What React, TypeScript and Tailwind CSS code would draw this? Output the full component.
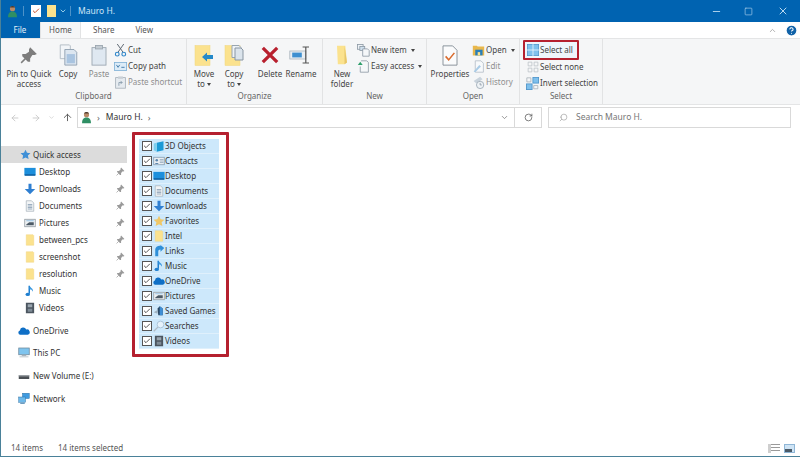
import type { ReactNode } from "react";
import { ChevronDown, ChevronUp, Minus, RotateCw, Search, Square, X, ArrowLeft, ArrowRight, ArrowUp, Check, HelpCircle } from "lucide-react";

// ---- icons, all inline since the explorer ones are not in any package
function Svg({ s = 16, children, className }: { s?: number; children: ReactNode; className?: string }) {
  return (
    <svg width={s} height={s} viewBox="0 0 16 16" className={className} fill="none">
      {children}
    </svg>
  );
}

const FolderIco = ({ s = 12 }: { s?: number }) => (
  <Svg s={s}>
    <path d="M3 1h9l1 1v13H3z" fill="#fbe28e" stroke="#efd27a" strokeWidth="0.6" />
  </Svg>
);
const DesktopIco = ({ s = 12 }: { s?: number }) => (
  <Svg s={s}>
    <rect x="0.5" y="2.5" width="15" height="10" fill="#1c8fdc" />
    <rect x="1" y="11" width="14" height="2" fill="#0f5f9e" />
  </Svg>
);
const DownloadIco = ({ s = 12 }: { s?: number }) => (
  <Svg s={s}>
    <path d="M6 1h4v7h5l-7 7-7-7h5z" fill="#2f7fd1" />
  </Svg>
);
const DocIco = ({ s = 12 }: { s?: number }) => (
  <Svg s={s}>
    <path d="M3 1h7l3 3v11H3z" fill="#f2f4f6" stroke="#a9b3bc" />
    <path d="M5 6h6M5 8h6M5 10h6M5 12h6" stroke="#7f97ad" />
  </Svg>
);
const PicturesIco = ({ s = 12 }: { s?: number }) => (
  <Svg s={s}>
    <rect x="1" y="3" width="14" height="10" fill="#eef1f3" stroke="#8b949c" />
    <path d="M3 10l4-3 6 0v4H3z" fill="#4c5a66" />
    <path d="M3 5h10" stroke="#9bc4e4" strokeWidth="1.4" />
  </Svg>
);
const MusicIco = ({ s = 12 }: { s?: number }) => (
  <Svg s={s}>
    <path d="M7 1v10.5" stroke="#1f7fd0" strokeWidth="2" />
    <ellipse cx="5" cy="12.5" rx="3" ry="2.3" fill="#1f7fd0" />
    <path d="M7.5 1c1 3 5 3 4.5 8-1-2.500-3-3.500-4.500-3.500z" fill="#3f9be0" />
  </Svg>
);
const VideoIco = ({ s = 12 }: { s?: number }) => (
  <Svg s={s}>
    <rect x="2.500" y="1" width="11" height="14" fill="#4c5660" />
    <rect x="5" y="3" width="6" height="4" fill="#9aa6b0" />
    <rect x="5" y="9" width="6" height="4" fill="#7f8c97" />
  </Svg>
);
const CloudIco = ({ s = 12 }: { s?: number }) => (
  <Svg s={s}>
    <path d="M3 13a3 3 0 0 1-.500-5.800A4.500 4.500 0 0 1 11 6a3.500 3.500 0 0 1 2 7z" fill="#0f6fc6" />
  </Svg>
);
const StarIco = ({ s = 12, c = "#3f8fd6" }: { s?: number; c?: string }) => (
  <Svg s={s}>
    <path d="M8 1l2.200 4.600 5 .6-3.700 3.400 1 5L8 12.200 3.500 14.600l1-5L.8 6.200l5-.6z" fill={c} />
  </Svg>
);
const PinIco = ({ s = 9, c = "#9a9a9a" }: { s?: number; c?: string }) => (
  <Svg s={s}>
    <path d="M9 1l6 6-2 1-2 0-2 3 0 3-2 0-5-5 0-2 3 0 3-2 0-2z" fill={c} />
    <path d="M5 11l-4 4" stroke={c} strokeWidth="1.300" />
  </Svg>
);
const PcIco = () => (
  <Svg s={13}>
    <rect x="1" y="2" width="14" height="9" fill="#7fc4ee" stroke="#6d8799" />
    <rect x="5" y="11" width="6" height="2" fill="#a8b4bd" />
    <rect x="2" y="13" width="12" height="1.500" fill="#c5ccd1" />
  </Svg>
);
const DriveIco = () => (
  <Svg s={12}>
    <rect x="1" y="7" width="14" height="5" fill="#4a4f54" />
    <rect x="1" y="7" width="14" height="1.500" fill="#a5abb0" />
  </Svg>
);
const NetworkIco = () => (
  <Svg s={13}>
    <rect x="6" y="1" width="9" height="7" fill="#3f9be0" stroke="#23699f" strokeWidth="0.6" />
    <rect x="1" y="6" width="9" height="7" fill="#6db9ea" stroke="#23699f" strokeWidth="0.6" />
    <path d="M3 14.500h6" stroke="#23699f" />
  </Svg>
);
const CubeIco = () => (
  <Svg s={13}>
    <path d="M5 3l9-2v12l-9 2z" fill="#1b9ad6" />
    <path d="M1 4l4-1v12l-4-2z" fill="#7ccfee" />
  </Svg>
);
const ContactsIco = () => (
  <Svg s={12}>
    <rect x="1" y="3" width="14" height="10" fill="#e9eef3" stroke="#7f97ad" />
    <circle cx="5" cy="7" r="1.700" fill="#5b86ad" />
    <path d="M2.500 12c0-2 5-2 5 0z" fill="#5b86ad" />
    <path d="M9 6h5M9 8h5M9 10h5" stroke="#8fa6ba" />
  </Svg>
);
const LinksIco = () => (
  <Svg s={12}>
    <path d="M3 15V6c0-3 3-5 6-5h1V0l5 4-5 5V6c-2 0-3 1-3 3v6z" fill="#2f8fd8" />
  </Svg>
);
const GamesIco = () => (
  <Svg s={13}>
    <path d="M1 9l5-3v5z" fill="#9fb1bf" />
    <path d="M6 4l3-3 4 3v9H7z" fill="#2c4a66" />
    <path d="M9 1l4 3v9H9z" fill="#3f8fd6" />
  </Svg>
);
const SearchGlassIco = () => (
  <Svg s={12}>
    <circle cx="10" cy="6" r="4.500" fill="#e6f2fb" stroke="#9fb9cf" />
    <path d="M6.500 9.500L1 15" stroke="#b0bcc6" strokeWidth="1.800" />
  </Svg>
);
const UserIco = ({ s = 14 }: { s?: number }) => (
  <Svg s={s}>
    <circle cx="8" cy="4.500" r="3.200" fill="#b98a68" />
    <path d="M2.500 15c0-5 2.500-7 5.500-7s5.500 2 5.500 7z" fill="#2f8f64" />
    <path d="M5 3c1-2.500 5-2.500 6 0z" fill="#4a3a30" />
  </Svg>
);

const CopyIco = () => (
  <svg width="19" height="22" viewBox="0 0 20 24" fill="none">
    <path d="M1 1h10l1 1v14H1z" fill="#f2f5f8" stroke="#b0bac3" />
    <path d="M6 6h10l3 3v14H6z" fill="#dce6f0" stroke="#8fa0b0" />
    <rect x="8" y="11" width="9" height="10" fill="#a9c4e0" />
  </svg>
);
const PasteIco = () => (
  <svg width="16" height="21" viewBox="0 0 18 24" fill="none">
    <rect x="1" y="3" width="16" height="20" fill="#dfe8f1" stroke="#9aa5af" />
    <rect x="5" y="0.500" width="8" height="4" fill="#c4ccd3" stroke="#9aa5af" />
  </svg>
);
const MoveIco = () => (
  <svg width="20" height="21" viewBox="0 0 20 21" fill="none">
    <rect x="1" y="0.500" width="15" height="20" fill="#fbe28e" stroke="#f0d57e" strokeWidth="0.5" />
    <path d="M8 12l5-4.500V10h6v4h-6v2.500z" fill="#2489c9" />
  </svg>
);
const CopyToIco = () => (
  <svg width="20" height="21" viewBox="0 0 20 21" fill="none">
    <rect x="1" y="0.500" width="15" height="20" fill="#fbe28e" stroke="#f0d57e" strokeWidth="0.5" />
    <path d="M8 0.500h7l2 2v10H8z" fill="#eef2f6" stroke="#98a5b1" />
    <path d="M11 3h6l2 2v10h-8z" fill="#dbe4ec" stroke="#8996a3" />
  </svg>
);
const DeleteIco = () => (
  <svg width="18" height="18" viewBox="0 0 20 20">
    <path d="M2 2l16 16M18 2L2 18" stroke="#b8202e" strokeWidth="3.600" />
  </svg>
);
const RenameIco = () => (
  <svg width="24" height="20" viewBox="0 0 30 22" fill="none">
    <rect x="1" y="6" width="20" height="10" fill="#e8eef3" stroke="#aab4bc" />
    <rect x="4" y="8" width="12" height="6" fill="#3d8fd0" />
    <path d="M17 1h8M21 1v20M17 21h8" stroke="#555" strokeWidth="1.500" />
  </svg>
);
const NewFolderIco = () => (
  <svg width="14" height="20" viewBox="0 0 16 24" fill="none">
    <path d="M2 1h10l2 20-3 2H3z" fill="#fbe28e" />
    <path d="M11 1l3 20-3 2z" fill="#e6c66a" />
  </svg>
);
const NewItemIco = () => (
  <Svg s={13}>
    <rect x="0.500" y="0.500" width="7" height="6" fill="#eef2f6" stroke="#8b98a4" />
    <rect x="3.500" y="3" width="6" height="5" fill="#cfe0ee" stroke="#8b98a4" />
    <path d="M7 6h6l2 2v7H7z" fill="#f5f7f9" stroke="#8b98a4" />
  </Svg>
);
const EasyIco = () => (
  <Svg s={13}>
    <path d="M5 1h7l2 2v12H4V8" fill="#f5f7f9" stroke="#8b98a4" />
    <path d="M1 6l3-4 3 4z" fill="#2e9e6a" />
  </Svg>
);
const PropsIco = () => (
  <svg width="16" height="21" viewBox="0 0 18 24" fill="none">
    <path d="M1 1h11l5 5v17H1z" fill="#fafbfc" stroke="#7e8891" />
    <path d="M4 13l3.500 4L14 9" stroke="#d96a2c" strokeWidth="1.800" />
  </svg>
);
const OpenIco = () => (
  <Svg s={13}>
    <path d="M1 2h5l1 1h8v11H1z" fill="#e9b84c" />
    <rect x="4" y="7" width="9" height="7" fill="#2a7fb8" />
    <rect x="7" y="10" width="3" height="4" fill="#fbe28e" />
  </Svg>
);
const EditIco = () => (
  <Svg s={13}>
    <path d="M4 1h7l3 3v11H4z" fill="#f7f9fb" stroke="#b3bdc6" />
    <path d="M2 14l7-8 2 2-7 7z" fill="#a9cbe6" />
  </Svg>
);
const HistoryIco = () => (
  <Svg s={13}>
    <path d="M2 6l8-5 3 3-8 5z" fill="#c9d3dc" />
    <circle cx="10" cy="11" r="4.500" fill="#eef2f5" stroke="#98a5b1" />
    <path d="M10 8.500V11h2" stroke="#8b98a4" />
  </Svg>
);
const SelectAllIco = () => (
  <Svg s={12}>
    <rect x="0.500" y="0.500" width="15" height="15" fill="#7fc0ec" stroke="#4d93c9" />
    <path d="M8 0v16M0 8h16" stroke="#f3f8fc" />
  </Svg>
);
const SelectNoneIco = () => (
  <Svg s={12}>
    <path d="M1.500 1.500h5v5h-5zM9.500 1.500h5v5h-5zM1.500 9.500h5v5h-5zM9.500 9.500h5v5h-5z" stroke="#b9c0c6" />
  </Svg>
);
const InvertIco = () => (
  <Svg s={13}>
    <path d="M1 1h5v5H1zM1 10h5v5H1z M9.500 10.500h5v4h-5z" stroke="#a9b2ba" />
    <rect x="8.500" y="0.500" width="7" height="7" fill="#7fc0ec" stroke="#4d93c9" />
    <rect x="0.500" y="8.500" width="7" height="7" fill="#7fc0ec" stroke="#4d93c9" />
  </Svg>
);
const ScissorsIco = () => (
  <Svg s={13}>
    <path d="M5 10L12 0M11 10L4 0" stroke="#5d6872" strokeWidth="1.200" />
    <circle cx="4" cy="12.500" r="2.300" stroke="#2f86c9" strokeWidth="1.400" />
    <circle cx="12" cy="12.500" r="2.300" stroke="#2f86c9" strokeWidth="1.400" />
  </Svg>
);
const CopyPathIco = () => (
  <Svg s={13}>
    <rect x="0.500" y="3" width="15" height="10" fill="#dcecf8" stroke="#7fb0d6" />
    <path d="M3 6l2 3 2-3M9 9h4" stroke="#27689e" />
  </Svg>
);
const PasteShortcutIco = () => (
  <Svg s={13}>
    <rect x="2" y="2" width="12" height="13" fill="#e6ebf0" stroke="#a5afb8" />
    <rect x="5" y="0.500" width="6" height="3" fill="#c9d0d6" />
    <path d="M6 12V8h4M8 6l2 2-2 2" stroke="#8296a8" />
  </Svg>
);

// ---- ribbon pieces
function Caret({ className = "" }: { className?: string }) {
  return <span className={`inline-block border-x-[2.5px] border-t-[3px] border-x-transparent border-t-[#444] ${className}`} />;
}

function Group({ w, label, children }: { w: string; label: string; children: ReactNode }) {
  return (
    <div className={`flex flex-col h-full border-r border-[#e2e3e4] ${w}`}>
      <div className="flex flex-1 min-h-0 items-start pt-[2px]">{children}</div>
      <div className="h-[15px] leading-[14px] text-center text-[#666]">{label}</div>
    </div>
  );
}

function Big({ w, icon, lines, caret, muted }: { w: string; icon: ReactNode; lines: string[]; caret?: boolean; muted?: boolean }) {
  return (
    <div className={`flex flex-col items-center shrink-0 ${w} ${muted ? "text-[#8a8a8a]" : "text-[#444]"}`}>
      <div className="h-[28px] flex items-center justify-center">{icon}</div>
      {lines.map((l) => (
        <div key={l} className="h-[10px] leading-[10px] whitespace-nowrap flex items-center gap-[2px]">
          {l}
          {caret && l === lines[lines.length - 1] && <Caret />}
        </div>
      ))}
    </div>
  );
}

function Small({ icon, label, caret, muted }: { icon: ReactNode; label: string; caret?: boolean; muted?: boolean }) {
  return (
    <div className={`flex items-center h-[16px] gap-[1px] whitespace-nowrap ${muted ? "text-[#8f8f8f]" : "text-[#444]"}`}>
      <span className="w-[13px] flex justify-center shrink-0">{icon}</span>
      {label}
      {caret && <Caret className="ml-[3px]" />}
    </div>
  );
}

// ---- nav and file list data
const quick: { name: string; icon: ReactNode; pin: boolean }[] = [
  { name: "Desktop", icon: <DesktopIco />, pin: true },
  { name: "Downloads", icon: <DownloadIco />, pin: true },
  { name: "Documents", icon: <DocIco />, pin: true },
  { name: "Pictures", icon: <PicturesIco />, pin: true },
  { name: "between_pcs", icon: <FolderIco />, pin: true },
  { name: "screenshot", icon: <FolderIco />, pin: true },
  { name: "resolution", icon: <FolderIco />, pin: true },
  { name: "Music", icon: <MusicIco />, pin: false },
  { name: "Videos", icon: <VideoIco />, pin: false },
];

const files: { name: string; icon: ReactNode }[] = [
  { name: "3D Objects", icon: <CubeIco /> },
  { name: "Contacts", icon: <ContactsIco /> },
  { name: "Desktop", icon: <DesktopIco /> },
  { name: "Documents", icon: <DocIco /> },
  { name: "Downloads", icon: <DownloadIco /> },
  { name: "Favorites", icon: <StarIco c="#f0c766" /> },
  { name: "Intel", icon: <FolderIco /> },
  { name: "Links", icon: <LinksIco /> },
  { name: "Music", icon: <MusicIco /> },
  { name: "OneDrive", icon: <CloudIco /> },
  { name: "Pictures", icon: <PicturesIco /> },
  { name: "Saved Games", icon: <GamesIco /> },
  { name: "Searches", icon: <SearchGlassIco /> },
  { name: "Videos", icon: <VideoIco /> },
];

function NavRoot({ icon, name, className = "" }: { icon: ReactNode; name: string; className?: string }) {
  return (
    <div className={`flex items-center h-[17px] pl-[17px] ${className}`}>
      <span className="w-[12px] flex justify-center shrink-0">{icon}</span>
      <span className="ml-[3px]">{name}</span>
    </div>
  );
}

export default function App() {
  return (
    <div
      className="w-[800px] h-[457px] overflow-hidden flex flex-col bg-white text-[8px] text-[#333] border-l border-b border-[#4a8199]"
      style={{ fontFamily: '"Noto Sans", sans-serif' }}
    >
      {/* title bar */}
      <div className="h-[22px] bg-[#0063b1] flex items-center shrink-0 -ml-px pl-[6px] text-[#cfe6f7]">
        <UserIco s={13} />
        <span className="w-px h-[10px] bg-[#4d92c8] ml-[4px]" />
        <span className="ml-[7px] w-[10px] h-[12px] bg-white flex items-center justify-center">
          <Check size={8} color="#c8502a" strokeWidth={3} />
        </span>
        <span className="ml-[6px] w-[9px] h-[12px] bg-[#fbe28e]" />
        <ChevronDown size={8} className="ml-[3px]" color="#dff" />
        <span className="w-px h-[10px] bg-[#4d92c8] ml-[3px]" />
        <span className="ml-[7px] text-[8.5px]">Mauro H.</span>
        <div className="ml-auto flex items-center text-[#b9d9f0]">
          <Minus size={11} className="mr-[22px]" />
          <Square size={9} strokeWidth={1.6} className="mr-[24px]" />
          <X size={12} className="mr-[11px]" />
        </div>
      </div>

      {/* tabs */}
      <div className="h-[16px] flex items-stretch shrink-0 -ml-px text-[#555]">
        <div className="w-[40px] bg-[#0063b1] text-[#e4f1fb] flex items-center justify-center">File</div>
        <div className="w-[41px] border-x border-[#e2e3e4] bg-[#f5f6f7] flex items-center justify-center">Home</div>
        <div className="ml-[12px] flex items-center">Share</div>
        <div className="ml-[21px] flex items-center">View</div>
        <div className="ml-auto flex items-center pr-[2px]">
          <ChevronUp size={9} color="#999" className="mr-[8px]" />
          <HelpCircle size={13} color="#fff" fill="#1062a8" />
        </div>
      </div>

      {/* ribbon */}
      <div className="h-[67px] bg-[#f5f6f7] border-t border-b border-[#e4e5e6] flex shrink-0">
        <Group w="w-[186px]" label="Clipboard">
          <Big w="w-[48px] ml-[4px]" icon={<PinIco s={18} c="#7d7d7d" />} lines={["Pin to Quick", "access"]} />
          <Big w="w-[28px] ml-[1px]" icon={<CopyIco />} lines={["Copy"]} />
          <Big w="w-[28px] ml-[3px]" icon={<PasteIco />} lines={["Paste"]} muted />
          <div className="ml-[1px] pt-[1px] flex flex-col">
            <Small icon={<ScissorsIco />} label="Cut" />
            <Small icon={<CopyPathIco />} label="Copy path" />
            <Small icon={<PasteShortcutIco />} label="Paste shortcut" muted />
          </div>
        </Group>
        <Group w="w-[136px]" label="Organize">
          <Big w="w-[26px] ml-[4px]" icon={<MoveIco />} lines={["Move", "to"]} caret />
          <Big w="w-[26px] ml-[4px]" icon={<CopyToIco />} lines={["Copy", "to"]} caret />
          <Big w="w-[24px] ml-[11px]" icon={<DeleteIco />} lines={["Delete"]} />
          <Big w="w-[30px] ml-[4px]" icon={<RenameIco />} lines={["Rename"]} />
        </Group>
        <Group w="w-[104px]" label="New">
          <Big w="w-[24px] ml-[7px]" icon={<NewFolderIco />} lines={["New", "folder"]} />
          <div className="ml-[3px] pt-[1px] flex flex-col">
            <Small icon={<NewItemIco />} label="New item" caret />
            <Small icon={<EasyIco />} label="Easy access" caret />
          </div>
        </Group>
        <Group w="w-[93px]" label="Open">
          <Big w="w-[40px] ml-[3px]" icon={<PropsIco />} lines={["Properties"]} />
          <div className="ml-[2px] pt-[1px] flex flex-col">
            <Small icon={<OpenIco />} label="Open" caret />
            <Small icon={<EditIco />} label="Edit" muted />
            <Small icon={<HistoryIco />} label="History" muted />
          </div>
        </Group>
        <Group w="w-[83px]" label="Select">
          <div className="ml-[3px] -mt-[1px] flex flex-col">
            <div className="border-[2px] border-[#b5202f] rounded-[1px] bg-[#eef5fb] h-[20px] w-[56px] flex items-center pl-[1px] -mb-[1px]">
              <Small icon={<SelectAllIco />} label="Select all" />
            </div>
            <div className="pl-[3px]">
              <Small icon={<SelectNoneIco />} label="Select none" />
              <Small icon={<InvertIco />} label="Invert selection" />
            </div>
          </div>
        </Group>
      </div>

      {/* address bar */}
      <div className="h-[25px] flex items-center shrink-0 text-[#444]">
        <ArrowLeft size={10} color="#c4c4c4" className="ml-[9px]" />
        <ArrowRight size={10} color="#c4c4c4" className="ml-[11px]" />
        <ChevronDown size={7} color="#c4c4c4" className="ml-[7px]" />
        <ArrowUp size={11} color="#555" className="ml-[7px]" />
        <div className="ml-[4px] w-[438px] h-[21px] border border-[#d9d9d9] flex items-center pl-[2px]">
          <UserIco s={13} />
          <span className="ml-[4px] text-[9px] text-[#666]">›</span>
          <span className="ml-[6px] text-[8.5px] text-[#333]">Mauro H.</span>
          <span className="ml-[5px] text-[9px] text-[#666]">›</span>
          <ChevronDown size={9} color="#777" className="ml-auto mr-[5px]" />
        </div>
        <div className="w-[27px] h-[21px] border-y border-r border-[#d9d9d9] flex items-center justify-center">
          <RotateCw size={9} color="#555" />
        </div>
        <div className="ml-[6px] w-[243px] h-[21px] border border-[#d9d9d9] flex items-center pl-[10px] text-[#777]">
          <Search size={9} color="#aaa" className="-scale-x-100" />
          <span className="ml-[8px] text-[8.5px]">Search Mauro H.</span>
        </div>
      </div>

      {/* body */}
      <div className="flex-1 flex min-h-0">
        <div className="w-[126px] shrink-0 pt-[16px] text-[#333]">
          <div className="flex items-center h-[17px] pl-[18px] bg-[#dcdcdc]">
            <span className="w-[12px] flex justify-center shrink-0">
              <StarIco s={11} />
            </span>
            <span className="ml-[2px]">Quick access</span>
          </div>
          {quick.map((q) => (
            <div key={q.name} className="flex items-center h-[17px] pl-[23px]">
              <span className="w-[12px] flex justify-center shrink-0">{q.icon}</span>
              <span className="ml-[3px]">{q.name}</span>
              {q.pin && (
                <span className="ml-auto mr-[2px]">
                  <PinIco />
                </span>
              )}
            </div>
          ))}
          <NavRoot icon={<CloudIco />} name="OneDrive" className="mt-[6px]" />
          <NavRoot icon={<PcIco />} name="This PC" className="mt-[5px]" />
          <NavRoot icon={<DriveIco />} name="New Volume (E:)" className="mt-[6px]" />
          <NavRoot icon={<NetworkIco />} name="Network" className="mt-[6px]" />
        </div>
        <div className="flex-1 pl-[5px] pt-[2px]">
          <div className="w-[97px] h-[225px] border-[3px] border-[#b5202f] rounded-[1px] pl-[4px] pt-[4px]">
            <div className="w-[80px]">
              {files.map((f) => (
                <div key={f.name} className="h-[15px] flex items-center bg-[#cde8fb] border-b border-[#dff0fc] pl-[3px]">
                  <span className="w-[10px] h-[10px] border border-[#555] bg-white flex items-center justify-center shrink-0">
                    <Check size={8} color="#333" strokeWidth={2.5} />
                  </span>
                  <span className="w-[12px] ml-[1px] flex justify-center shrink-0">{f.icon}</span>
                  <span className="whitespace-nowrap">{f.name}</span>
                </div>
              ))}
            </div>
          </div>
        </div>
      </div>

      {/* status bar */}
      <div className="h-[16px] flex items-center shrink-0 text-[#555] pl-[10px]">
        <span>14 items</span>
        <span className="ml-[15px]">14 items selected</span>
        <div className="ml-auto flex items-center gap-[4px] pr-[5px]">
          <span className="w-[12px] h-[9px] bg-[repeating-linear-gradient(#9a9a9a_0_1px,transparent_1px_3px)] border-l-[3px] border-[#cfcfcf]" />
          <span className="w-[11px] h-[9px] bg-[#cfe4f5] border border-[#8fb6d6] flex items-end">
            <span className="w-[7px] h-[3px] bg-[#4c5a66]" />
          </span>
        </div>
      </div>
    </div>
  );
}
